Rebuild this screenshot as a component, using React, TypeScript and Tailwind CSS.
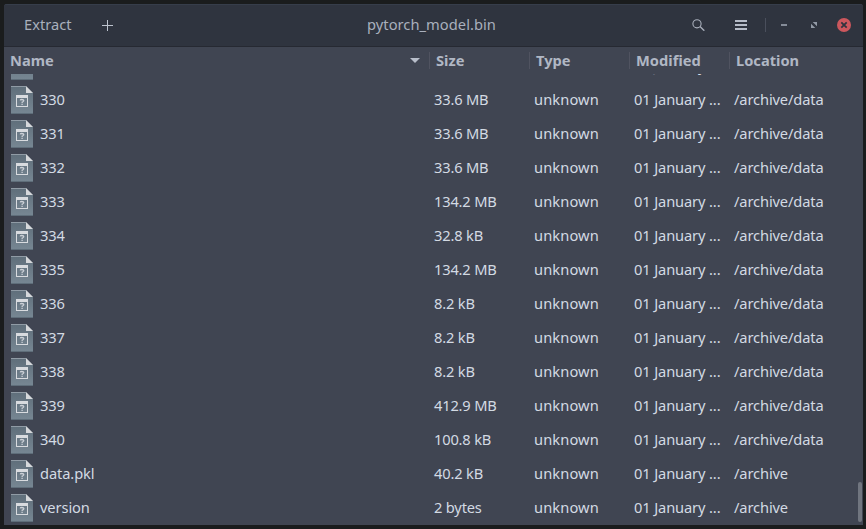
type Entry = { name: string; size: string; modified: string; location: string };

const DATE = "01 January ...";
const DATA = "/archive/data";

const entries: Entry[] = [
  { name: "33", size: "8.2 kB", modified: DATE, location: DATA },
  { name: "330", size: "33.6 MB", modified: DATE, location: DATA },
  { name: "331", size: "33.6 MB", modified: DATE, location: DATA },
  { name: "332", size: "33.6 MB", modified: DATE, location: DATA },
  { name: "333", size: "134.2 MB", modified: DATE, location: DATA },
  { name: "334", size: "32.8 kB", modified: DATE, location: DATA },
  { name: "335", size: "134.2 MB", modified: DATE, location: DATA },
  { name: "336", size: "8.2 kB", modified: DATE, location: DATA },
  { name: "337", size: "8.2 kB", modified: DATE, location: DATA },
  { name: "338", size: "8.2 kB", modified: DATE, location: DATA },
  { name: "339", size: "412.9 MB", modified: DATE, location: DATA },
  { name: "340", size: "100.8 kB", modified: DATE, location: DATA },
  { name: "data.pkl", size: "40.2 kB", modified: DATE, location: "/archive" },
  { name: "version", size: "2 bytes", modified: DATE, location: "/archive" },
];

function FileIcon() {
  return (
    <svg className="shrink-0" width="22" height="28" viewBox="0 0 22 28">
      <defs>
        <linearGradient id="paper" x1="0" y1="0" x2="0" y2="1">
          <stop offset="0" stopColor="#5f6e7a" />
          <stop offset="1" stopColor="#778793" />
        </linearGradient>
      </defs>
      <path d="M0 0h15l7 7v21H0z" fill="url(#paper)" />
      <path d="M0 0h15v1H0z" fill="#909ba5" />
      <path d="M0 27h22v1H0z" fill="#5f6e7a" />
      <path d="M15 0l7 7h-7z" fill="#d6d8db" />
      <path d="M5 9h12v12H5zM6 12v8h10v-8z" fill="#d8dbdf" fillRule="evenodd" />
      <path d="M9.2 14.4q.2-.9 1.8-.9t1.8 1-1.6 1.6v.8M11.1 17.8v1.2" fill="none" stroke="#ccd1d7" strokeWidth="1.3" />
    </svg>
  );
}

function Heading({ label }: { label: string }) {
  return (
    <div className="flex w-[100px] shrink-0 items-center">
      <span className="h-[17px] w-px bg-[#505360]" />
      <span className="pb-[2px] pl-[6px]">{label}</span>
    </div>
  );
}

function Row({ entry }: { entry: Entry }) {
  return (
    <div className="flex h-[34px] shrink-0 items-center whitespace-pre text-[#d3dae3]">
      <div className="flex w-[430px] shrink-0 items-center gap-[7px] pl-[7px]">
        <FileIcon />
        <span className="pb-[2px] tracking-[-0.1px]">{entry.name}</span>
      </div>
      <span className="w-[100px] shrink-0 pb-[2px] tracking-[-0.18px]">{entry.size}</span>
      <span className="w-[100px] shrink-0 pb-[2px] tracking-[0.1px]">unknown</span>
      <span className="w-[100px] shrink-0 pb-[2px] tracking-[-0.13px]">{entry.modified}</span>
      <span className="pb-[2px] tracking-[-0.13px]">{entry.location}</span>
    </div>
  );
}

export default function App() {
  return (
    <div className="h-[529px] w-[866px] overflow-hidden bg-[#1a1c1d] pt-1 pr-[3px] pb-1 pl-1 font-['Noto_Sans',sans-serif] text-[14.667px] leading-5">
      <div className="flex h-[521px] w-[859px] flex-col overflow-hidden rounded-t-[3px] bg-[#404552]">
        <header className="flex h-[43px] shrink-0 items-center border-t border-b border-t-[#363d4a] border-b-[#262932] bg-[#2f343f] text-[#a9b0bd]">
          <div className="flex w-[363px] items-center pl-5">
            <span className="w-[78px] pb-[3px]">Extract</span>
            <svg width="11" height="11" viewBox="0 0 11 11">
              <path d="M5 0h1v11H5zM0 5h11v1H0z" fill="#bdc3ce" />
            </svg>
          </div>
          <h1 className="w-[325px] pb-[3px] tracking-[0.05px]">pytorch_model.bin</h1>
          <div className="flex items-center pb-px">
            <svg width="13" height="12" viewBox="0 0 13 12" fill="none" stroke="#a9afbb">
              <circle cx="5" cy="4.8" r="4.1" strokeWidth="1.1" />
              <path d="M8 7.5l4.3 4.2" strokeWidth="1.4" />
            </svg>
            <svg className="ml-[30px]" width="12" height="10" viewBox="0 0 12 10">
              <path d="M0 0h12v2H0zM0 4h12v2H0zM0 8h12v2H0z" fill="#b6bcc8" />
            </svg>
            <span className="ml-[18px] h-[14px] w-px bg-[#4a4f5c]" />
            <span className="ml-[15px] h-[2px] w-[6px] bg-[#858c98]" />
            <svg className="ml-[24px]" width="6" height="6" viewBox="0 0 6 6" fill="#929aa6">
              <path d="M1.7 0H6v4.3zM0 1.7v4.3h4.3z" />
            </svg>
            <svg className="ml-[20px]" width="14" height="14" viewBox="0 0 14 14">
              <circle cx="7" cy="7" r="7" fill="#cc575d" />
              <path d="M4.3 4.3l5.4 5.4m0-5.4l-5.4 5.4" stroke="#2f343f" strokeWidth="1.8" />
            </svg>
          </div>
        </header>

        <div className="flex h-[27px] shrink-0 items-center font-bold text-[#b0b7c4]">
          <div className="flex w-[425px] shrink-0 items-center justify-between pr-[9px] pl-[6px]">
            <span className="pb-[2px]">Name</span>
            <svg width="10" height="5" viewBox="0 0 10 5">
              <path d="M0 0h10L5 5z" fill="#b8beca" />
            </svg>
          </div>
          <Heading label="Size" />
          <Heading label="Type" />
          <Heading label="Modified" />
          <Heading label="Location" />
        </div>

        <main className="relative flex min-h-0 flex-1 flex-col justify-end overflow-hidden">
          {entries.map((entry) => (
            <Row key={entry.name} entry={entry} />
          ))}
          <span className="absolute right-[1px] bottom-[3px] h-10 w-1 rounded-full bg-[#70757f]" />
        </main>
      </div>
    </div>
  );
}
